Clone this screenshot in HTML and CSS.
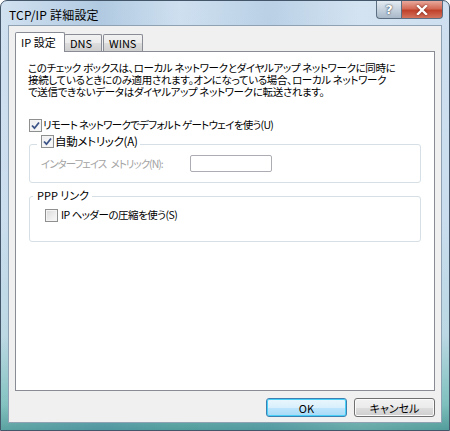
FILE: index.html
```html
<!DOCTYPE html>
<html lang="ja">
<head>
  <meta charset="UTF-8">
  <title>TCP/IP 詳細設定</title>
  <link rel="stylesheet" href="styles.css">
</head>
<body>
  <div class="window">
    <div class="titlebar">
      <span class="title">TCP/IP 詳細設定</span>
      <div class="controls">
        <span class="ctl help">?</span>
        <span class="ctl close">
          <svg width="12" height="10" viewBox="0 0 12 10"><path d="M2 1 L10 9 M10 1 L2 9" stroke="#fff" stroke-width="2.4" stroke-linecap="square"/></svg>
        </span>
      </div>
    </div>

    <div class="client">
      <div class="tabs">
        <span class="tab active">IP 設定</span>
        <span class="tab">DNS</span>
        <span class="tab">WINS</span>
      </div>

      <div class="panel">
        <p class="desc">このチェック ボックスは、ローカル ネットワークとダイヤルアップ ネットワークに同時に<br>接続しているときにのみ適用されます。オンになっている場合、ローカル ネットワーク<br>で送信できないデータはダイヤルアップ ネットワークに転送されます。</p>

        <label class="check gateway">
          <span class="box on"><svg width="11" height="11" viewBox="0 0 11 11"><path d="M2 5.5 L4.5 8.2 L9 2.5" fill="none" stroke="#3c5488" stroke-width="1.8"/></svg></span>
          リモート ネットワークでデフォルト ゲートウェイを使う(U)
        </label>

        <div class="group metric">
          <label class="check legend">
            <span class="box on"><svg width="11" height="11" viewBox="0 0 11 11"><path d="M2 5.5 L4.5 8.2 L9 2.5" fill="none" stroke="#3c5488" stroke-width="1.8"/></svg></span>
            自動メトリック(A)
          </label>
          <div class="field">
            <span class="disabled">インターフェイス メトリック(N):</span>
            <span class="input"></span>
          </div>
        </div>

        <div class="group ppp">
          <span class="legend caption">PPP リンク</span>
          <label class="check">
            <span class="box"></span>
            IP ヘッダーの圧縮を使う(S)
          </label>
        </div>
      </div>

      <div class="buttons">
        <span class="btn default">OK</span>
        <span class="btn">キャンセル</span>
      </div>
    </div>
  </div>
</body>
</html>
```

FILE: styles.css
```css
body {
  margin: 0;
  background: #fff;
  font-family: "Noto Sans CJK JP", "Noto Sans", sans-serif;
  font-feature-settings: "palt";
}

/* aero glass frame */
.window {
  width: 450px;
  height: 431px;
  box-sizing: border-box;
  border: 1px solid #44576a;
  border-radius: 7px 7px 0 0;
  padding: 0 7px 7px;
  display: flex;
  flex-direction: column;
  background:
    linear-gradient(90deg, rgba(255,255,255,0.15) 0%, rgba(120,160,195,0.3) 22%, rgba(255,255,255,0.1) 40%, rgba(140,175,205,0.25) 60%, rgba(255,255,255,0.2) 80%, rgba(255,255,255,0.1) 100%),
    linear-gradient(180deg, #c9dcee 0%, #c3d9ec 50%, #b2d3e0 78%, #6fb9b6 94%, #3f9190 100%);
}

.titlebar {
  height: 25px;
  display: flex;
  align-items: flex-start;
}

.title {
  font-size: 12px;
  color: #000;
  margin: 5px 0 0 1px;
  letter-spacing: 0.2px;
}

.controls {
  margin-left: auto;
  margin-right: -1px;
  display: flex;
}

.ctl {
  height: 17px;
  display: flex;
  align-items: center;
  justify-content: center;
  border: 1px solid #5c6e82;
  border-top: none;
}

.help {
  width: 24px;
  border-radius: 0 0 0 4px;
  border-right: none;
  background: linear-gradient(180deg, #e4ebf2 0%, #c6d2de 50%, #a9b9c9 100%);
  color: #fff;
  font: bold 13px "DejaVu Sans", sans-serif;
  text-shadow: 0 0 2px #3b4c5e, 0 0 1px #3b4c5e;
}

.close {
  width: 40px;
  border-radius: 0 0 4px 0;
  background: linear-gradient(180deg, #e9a99c 0%, #d46a56 45%, #c0412a 55%, #d3735c 100%);
}

.close svg {
  filter: drop-shadow(0 0 1px #6b1d10);
}

.client {
  flex: 1;
  background: #f0f0f0;
  border: 1px solid #8fa2b4;
  padding: 5px 6px;
  display: flex;
  flex-direction: column;
}

/* tab strip */
.tabs {
  display: flex;
  align-items: flex-end;
  height: 20px;
  position: relative;
  z-index: 1;
}

.tab {
  font-size: 11px;
  height: 16px;
  line-height: 16px;
  padding: 0 5px;
  border: 1px solid #898c95;
  border-bottom: none;
  border-radius: 2px 2px 0 0;
  margin-right: -1px;
  background: linear-gradient(180deg, #f2f2f2 0%, #ebebeb 50%, #dddddd 51%, #cfcfcf 100%);
}

.tab:nth-child(2) { width: 26px; }
.tab:nth-child(3) { width: 28px; margin-left: 2px; }

.tab.active {
  height: 19px;
  line-height: 19px;
  width: 38px;
  background: #fff;
  margin-bottom: -1px;
}

.panel {
  background: #fff;
  border: 1px solid #898c95;
  height: 338px;
  padding: 0 13px;
}

.desc {
  font-size: 10.5px;
  line-height: 12px;
  margin: 10px 0 0 -1px;
  color: #000;
  letter-spacing: -0.35px;
}

.check {
  display: flex;
  align-items: center;
  font-size: 10.5px;
  line-height: 14px;
  color: #000;
  letter-spacing: -0.5px;
}

.box {
  width: 11px;
  height: 11px;
  border: 1px solid #8e8f8f;
  margin-right: 1px;
  display: flex;
  align-items: center;
  justify-content: center;
  background: linear-gradient(135deg, #d9d9d9 0%, #eeeeee 60%, #f7f7f7 100%);
  box-shadow: inset 0 0 0 1px #f4f4f4;
}

.box.on {
  background: linear-gradient(135deg, #eeeeee 0%, #fafafa 100%);
}

.gateway {
  margin-top: 20px;
  letter-spacing: -0.7px;
}

.group {
  border: 1px solid #d5dfe5;
  border-radius: 3px;
  position: relative;
}

.legend {
  position: absolute;
  left: 7px;
  background: #fff;
  padding: 0 3px 0 4px;
}

.metric {
  margin-top: 12px;
  height: 37px;
}

.metric .legend {
  top: -11px;
  line-height: 14px;
  font-size: 11.5px;
  letter-spacing: -0.3px;
}

.field {
  display: flex;
  align-items: center;
  margin: 10px 0 0 11px;
}

.disabled {
  font-size: 10.5px;
  color: #a3a3a3;
  letter-spacing: -1px;
  word-spacing: 3px;
  width: 149px;
}

.input {
  width: 80px;
  height: 15px;
  border: 1px solid #abadb3;
  border-radius: 2px;
  background: #fff;
}

.ppp {
  margin-top: 13px;
  height: 44px;
}

.caption {
  font-size: 11px;
  line-height: 13px;
  left: 3px;
  top: -8px;
}

.ppp .check {
  margin: 11px 0 0 15px;
}

.ppp .box {
  margin-right: 3px;
}

/* dialog buttons */
.buttons {
  display: flex;
  justify-content: flex-end;
  gap: 7px;
  margin-top: 7px;
}

.btn {
  width: 79px;
  height: 17px;
  border: 1px solid #707070;
  border-radius: 3px;
  font-size: 11px;
  display: flex;
  align-items: center;
  justify-content: center;
  background: linear-gradient(180deg, #f2f2f2 0%, #ebebeb 50%, #dddddd 51%, #cfcfcf 100%);
  box-shadow: inset 0 0 0 1px #fbfbfb;
}

.btn.default {
  border-color: #3c7fb1;
  background: linear-gradient(180deg, #eaf6fd 0%, #d9f0fc 50%, #bee6fd 51%, #a7d9f5 100%);
  box-shadow: inset 0 0 0 1px #48d0f8;
}
```
